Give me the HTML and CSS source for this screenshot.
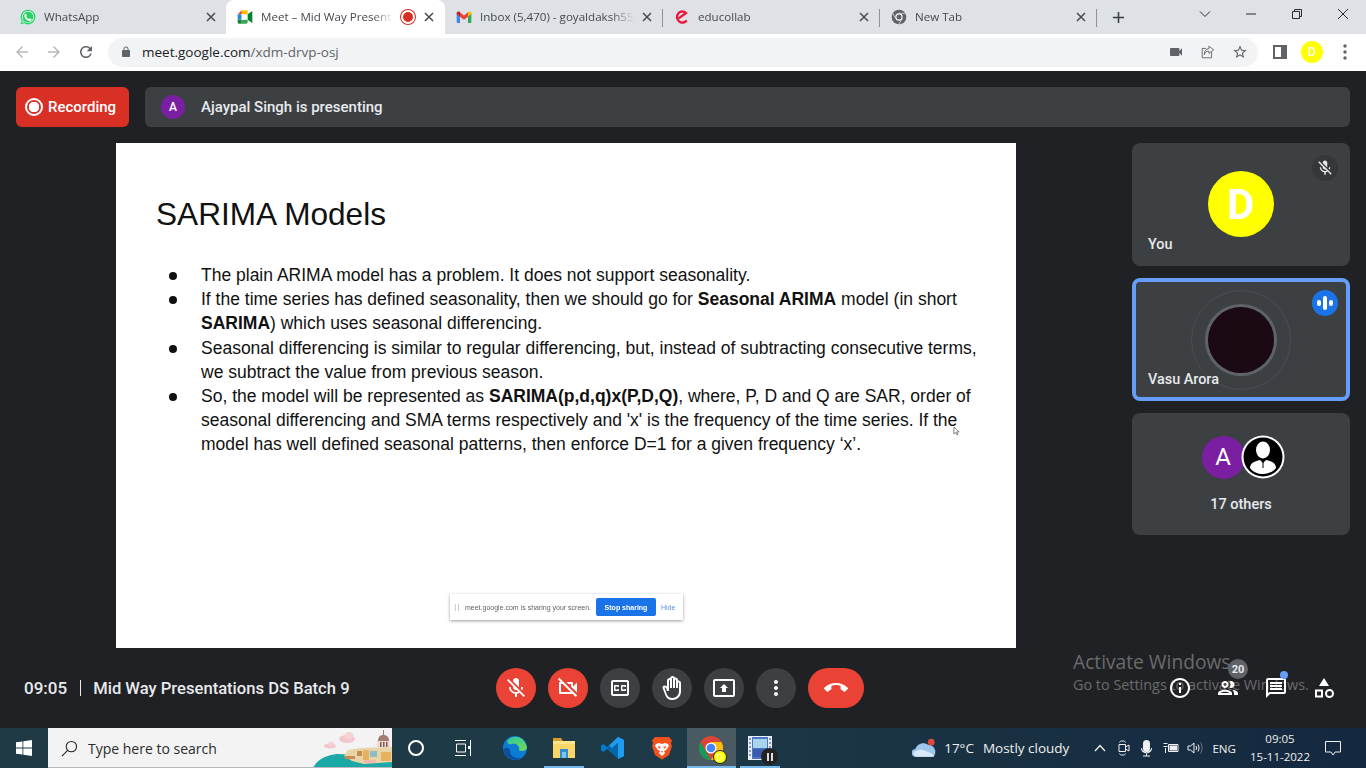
FILE: index.html
```html
<!DOCTYPE html>
<html lang="en">
<head>
<meta charset="utf-8">
<title>Meet – Mid Way Presentations DS Batch 9</title>
<link rel="stylesheet" href="styles.css">
</head>
<body>
<div class="browser">
  <div class="tabstrip">
    <div class="tab tab-first">
      <svg class="favicon" viewBox="0 0 24 24"><path fill="#25d366" d="M12 1a11 11 0 0 0-9.400 16.600L1 23l5.600-1.500A11 11 0 1 0 12 1z"/><path fill="#fff" d="M12 3a9 9 0 0 0-7.600 13.800l-1 3.800 3.900-1A9 9 0 1 0 12 3z"/><path fill="#25d366" d="M12 4a8 8 0 0 0-6.700 12.400l-.6 2.900 2.900-.7A8 8 0 1 0 12 4z"/><path fill="#fff" d="M9 7l1.200 2.800-.9 1.500c.9 1.800 2.200 3 4 3.900l1.400-1.300 2.800 1.300c.2 1.700-1.200 2.800-3.200 2.800-3.500 0-7.800-4.100-7.800-7.800C6.500 8.200 7.500 7 9 7z"/></svg>
      <span class="tab-title">WhatsApp</span>
      <svg class="tab-close" viewBox="0 0 10 10"><path d="M1 1l8 8M9 1l-8 8"/></svg>
    </div>
    <div class="tab tab-active">
      <svg class="favicon" viewBox="0 0 24 24"><path fill="#fbbc04" d="M7 2h9v6H7z"/><path fill="#ea4335" d="M1 8l6-6v6z"/><path fill="#1e88e5" d="M1 8h6v8H1z"/><path fill="#188038" d="M1 16h6v6H3c-1 0-2-1-2-2z"/><path fill="#34a853" d="M7 16h9v4c0 1-1 2-2 2H7z"/><path fill="#00832d" d="M16 8l7-5v18l-7-5z"/><path fill="#fff" d="M7 8h5v8H7z"/></svg>
      <span class="tab-title">Meet – Mid Way Presentations DS</span>
      <span class="rec-dot"></span>
      <svg class="tab-close" viewBox="0 0 10 10"><path d="M1 1l8 8M9 1l-8 8"/></svg>
    </div>
    <div class="tab tab-sep tab-inbox">
      <svg class="favicon" viewBox="0 0 24 24"><path fill="#4285f4" d="M1 6h5v15H2.500C1.700 21 1 20.300 1 19.500z"/><path fill="#34a853" d="M18 6h5v13.500c0 .8-.7 1.500-1.500 1.500H18z"/><path fill="#ea4335" d="M6 5l6 4.800L18 5v6.500l-6 4.500-6-4.500z"/><path fill="#c5221f" d="M1 6.500C1 4 3.700 3 5.500 4.300L6 5v6.500L1 7.500z"/><path fill="#fbbc04" d="M18 5l.5-.7C20.300 3 23 4 23 6.500v1l-5 4z"/></svg>
      <span class="tab-title">Inbox (5,470) - goyaldaksh55@gmail</span>
      <svg class="tab-close" viewBox="0 0 10 10"><path d="M1 1l8 8M9 1l-8 8"/></svg>
    </div>
    <div class="tab tab-sep">
      <svg class="favicon" viewBox="0 0 24 24"><path fill="none" stroke="#e8173c" stroke-width="3.500" d="M19 17c-2 3-7 5-11 2C4 16 3 10 7 6c3-3 8-3 11 0l-11 8"/></svg>
      <span class="tab-title">educollab</span>
      <svg class="tab-close" viewBox="0 0 10 10"><path d="M1 1l8 8M9 1l-8 8"/></svg>
    </div>
    <div class="tab tab-sep">
      <svg class="favicon" viewBox="0 0 24 24"><circle cx="12" cy="12" r="11" fill="#5f6368"/><circle cx="12" cy="12" r="5.500" fill="#fff"/><circle cx="12" cy="12" r="3.800" fill="#5f6368"/><path fill="none" stroke="#dee1e6" stroke-width="1.200" d="M12 6.500h10M7.200 14.800L2.500 6M16.800 14.800L11.500 23"/></svg>
      <span class="tab-title">New Tab</span>
      <svg class="tab-close" viewBox="0 0 10 10"><path d="M1 1l8 8M9 1l-8 8"/></svg>
    </div>
    <svg class="new-tab" viewBox="0 0 14 14"><path d="M7 1v12M1 7h12"/></svg>
    <div class="win-controls">
      <svg class="win-btn" viewBox="0 0 12 12"><path d="M1 3.500l5 5 5-5"/></svg>
      <svg class="win-btn" viewBox="0 0 12 12"><path d="M1 6h10"/></svg>
      <svg class="win-btn" viewBox="0 0 12 12"><path d="M1.500 3.500h7v7h-7zM3.500 3.500v-2h7v7h-2"/></svg>
      <svg class="win-btn" viewBox="0 0 12 12"><path d="M1 1l10 10M11 1L1 11"/></svg>
    </div>
  </div>
  <div class="toolbar">
    <svg class="nav-ic nav-off" viewBox="0 0 24 24"><path d="M20 11H7.830l5.590-5.590L12 4l-8 8 8 8 1.410-1.410L7.830 13H20v-2z"/></svg>
    <svg class="nav-ic nav-off" viewBox="0 0 24 24"><path d="M12 4l-1.410 1.410L16.170 11H4v2h12.170l-5.580 5.590L12 20l8-8z"/></svg>
    <svg class="nav-ic nav-reload" viewBox="0 0 24 24"><path d="M17.650 6.350C16.200 4.900 14.210 4 12 4c-4.420 0-7.990 3.580-7.990 8s3.570 8 7.990 8c3.730 0 6.840-2.550 7.730-6h-2.080c-.82 2.330-3.040 4-5.650 4-3.310 0-6-2.690-6-6s2.690-6 6-6c1.660 0 3.140.69 4.220 1.780L13 11h7V4l-2.350 2.350z"/></svg>
    <div class="omnibox">
      <svg class="lock" viewBox="0 0 24 24"><path d="M18 8h-1V6c0-2.760-2.240-5-5-5S7 3.240 7 6v2H6c-1.100 0-2 .9-2 2v10c0 1.100.9 2 2 2h12c1.100 0 2-.9 2-2V10c0-1.100-.9-2-2-2zm-2.900 0H8.900V6c0-1.710 1.390-3.100 3.100-3.100 1.710 0 3.100 1.390 3.100 3.100v2z"/></svg>
      <span class="url"><span class="url-host">meet.google.com</span>/xdm-drvp-osj</span>
      <svg class="omni-ic omni-cam" viewBox="0 0 24 24"><path d="M17 10.500V7c0-.55-.45-1-1-1H4c-.55 0-1 .45-1 1v10c0 .55.45 1 1 1h12c.55 0 1-.45 1-1v-3.500l4 4v-11l-4 4z"/></svg>
      <svg class="omni-ic omni-share" viewBox="0 0 18 18"><path d="M13 9v6.500H2.500V5H7M10 2.500l5.500 4-5.500 4V8C7 8 5.500 9.500 4.800 12c0-4 2-6.500 5.200-6.700z"/></svg>
      <svg class="omni-ic omni-star" viewBox="0 0 24 24"><path d="M22 9.240l-7.190-.62L12 2 9.190 8.630 2 9.240l5.460 4.730L5.820 21 12 17.270 18.180 21l-1.630-7.030L22 9.240zM12 15.400l-3.760 2.270 1-4.280-3.320-2.880 4.380-.38L12 6.100l1.710 4.040 4.380.38-3.320 2.880 1 4.280L12 15.400z"/></svg>
    </div>
    <span class="side-panel"></span>
    <span class="profile">D</span>
    <svg class="chrome-more" viewBox="0 0 4 16"><circle cx="2" cy="2" r="1.700"/><circle cx="2" cy="8" r="1.700"/><circle cx="2" cy="14" r="1.700"/></svg>
  </div>
</div>

<main class="meet">
  <div class="topbar">
    <div class="recording">
      <span class="rec-icon"></span>
      <span>Recording</span>
    </div>
    <div class="presenting">
      <span class="present-avatar">A</span>
      <span>Ajaypal Singh is presenting</span>
    </div>
  </div>

  <div class="stage">
    <section class="slide">
      <h1 class="slide-title">SARIMA Models</h1>
      <ul class="slide-list">
        <li>The plain ARIMA model has a problem. It does not support seasonality.</li>
        <li>If the time series has defined seasonality, then we should go for <b>Seasonal ARIMA</b> model (in short <b>SARIMA</b>) which uses seasonal differencing.</li>
        <li>Seasonal differencing is similar to regular differencing, but, instead of subtracting consecutive terms, we subtract the value from previous season.</li>
        <li>So, the model will be represented as <b>SARIMA(p,d,q)x(P,D,Q)</b>, where, P, D and Q are SAR, order of seasonal differencing and SMA terms respectively and 'x' is the frequency of the time series. If the model has well defined seasonal patterns, then enforce D=1 for a given frequency ‘x’.</li>
      </ul>
      <div class="share-bar">
        <span class="share-grip"></span>
        <span class="share-text">meet.google.com is sharing your screen.</span>
        <span class="share-stop">Stop sharing</span>
        <span class="share-hide">Hide</span>
      </div>
      <svg class="cursor" viewBox="0 0 8 11"><path d="M1 1v8l2-2 1.500 3 1.200-.6L4.300 6.500H7z"/></svg>
    </section>

    <aside class="tiles">
      <div class="tile">
        <span class="tile-badge badge-muted">
          <svg viewBox="0 0 24 24"><path d="M19 11h-1.700c0 .74-.16 1.430-.43 2.050l1.230 1.230c.56-.98.9-2.090.9-3.280zm-4.020.17c0-.06.02-.11.02-.17V5c0-1.660-1.340-3-3-3S9 3.340 9 5v.18l5.980 5.990zM4.270 3L3 4.270l6.010 6.010V11c0 1.660 1.330 3 2.990 3 .22 0 .44-.03.65-.08l1.660 1.660c-.71.33-1.500.52-2.310.52-2.760 0-5.300-2.100-5.300-5.100H5c0 3.410 2.720 6.230 6 6.720V21h2v-3.280c.91-.13 1.770-.45 2.540-.9L19.730 21 21 19.730 4.270 3z"/></svg>
        </span>
        <span class="tile-avatar avatar-you">D</span>
        <span class="tile-name">You</span>
      </div>
      <div class="tile tile-speaking">
        <span class="tile-badge badge-speaking"><i class="bar bar-s"></i><i class="bar bar-l"></i><i class="bar bar-s"></i></span>
        <span class="ring-outer"><span class="ring-inner"><span class="tile-avatar avatar-vasu"></span></span></span>
        <span class="tile-name">Vasu Arora</span>
      </div>
      <div class="tile tile-others">
        <div class="others-row">
          <span class="other-a">A</span>
          <svg class="other-b" viewBox="0 0 44 44"><circle cx="22" cy="22" r="21.500" fill="#fff"/><circle cx="22" cy="22" r="19.500" fill="#000"/><ellipse cx="22" cy="15" rx="7" ry="8.500" fill="#fff"/><path fill="#fff" d="M9 33c0-5 5-7 10-8l3 3 3-3c5 1 10 3 10 8-3 4-8 6-13 6s-10-2-13-6z"/><path d="M22 27v6" stroke="#000" stroke-width="1"/></svg>
        </div>
        <span class="others-label">17 others</span>
      </div>
    </aside>
  </div>

  <footer class="callbar">
    <div class="meeting-info">
      <span class="clock">09:05</span>
      <span class="divider"></span>
      <span class="meeting-name">Mid Way Presentations DS Batch 9</span>
    </div>
    <div class="controls">
      <span class="ctl ctl-red"><svg viewBox="0 0 24 24"><path d="M19 11h-1.700c0 .74-.16 1.430-.43 2.050l1.230 1.230c.56-.98.9-2.090.9-3.280zm-4.020.17c0-.06.02-.11.02-.17V5c0-1.660-1.340-3-3-3S9 3.340 9 5v.18l5.980 5.990zM4.270 3L3 4.270l6.010 6.010V11c0 1.660 1.330 3 2.990 3 .22 0 .44-.03.65-.08l1.660 1.660c-.71.33-1.500.52-2.310.52-2.760 0-5.300-2.100-5.300-5.100H5c0 3.410 2.720 6.230 6 6.720V21h2v-3.280c.91-.13 1.770-.45 2.540-.9L19.730 21 21 19.730 4.270 3z"/></svg></span>
      <span class="ctl ctl-red"><svg viewBox="0 0 24 24"><path d="M9.560 8l-2-2-4.150-4.140L2 3.270 4.730 6H4c-.55 0-1 .45-1 1v10c0 .55.45 1 1 1h12c.21 0 .39-.08.55-.18L19.730 21l1.410-1.410-8.860-8.860L9.560 8zM5 16V8h1.730l8 8H5zm10-8v2.610l6 6V6.500l-4 4V7c0-.55-.45-1-1-1h-5.610l2 2H15z"/></svg></span>
      <span class="ctl"><svg viewBox="0 0 24 24"><path d="M19 4H5c-1.110 0-2 .9-2 2v12c0 1.100.89 2 2 2h14c1.100 0 2-.9 2-2V6c0-1.100-.9-2-2-2zm0 14H5V6h14v12zM7 15h3c.55 0 1-.45 1-1v-1H9.500v.5h-2v-3h2v.5H11v-1c0-.55-.45-1-1-1H7c-.55 0-1 .45-1 1v4c0 .55.45 1 1 1zm7 0h3c.55 0 1-.45 1-1v-1h-1.500v.5h-2v-3h2v.5H18v-1c0-.55-.45-1-1-1h-3c-.55 0-1 .45-1 1v4c0 .55.45 1 1 1z"/></svg></span>
      <span class="ctl"><svg viewBox="0 0 24 24"><path d="M21 7c0-1.380-1.120-2.500-2.500-2.500-.17 0-.34.02-.5.05V4c0-1.380-1.120-2.500-2.500-2.500-.23 0-.46.03-.67.09C14.460.66 13.560 0 12.500 0c-1.230 0-2.250.89-2.460 2.060C9.870 2.020 9.690 2 9.500 2 8.120 2 7 3.120 7 4.500v5.890c-.34-.31-.76-.54-1.220-.66L5 9.520c-.83-.23-1.700.09-2.190.83-.38.57-.4 1.310-.15 1.950l2.560 6.430C6.490 22.910 9.570 24 12.500 24c4.140 0 8.500-3.360 8.500-8.500V7zm-2 8.500c0 3.080-2.900 6.500-6.500 6.500-2.550 0-4.600-.9-5.730-3.750L4.500 11.470c.02-.01.09-.02.3.03l.62.16c.36.09.58.29.75.66L7 15.010h2V4.500c0-.28.22-.5.5-.5s.5.22.5.5V12h2V2.500c0-.28.22-.5.5-.5s.5.22.5.5V12h2V4c0-.28.22-.5.5-.5s.5.22.5.5v8h2V7c0-.28.22-.5.5-.5s.5.22.5.5v8.500z"/></svg></span>
      <span class="ctl"><svg viewBox="0 0 24 24"><path d="M21 3H3c-1.110 0-2 .89-2 2v14c0 1.110.89 2 2 2h18c1.110 0 2-.89 2-2V5c0-1.110-.89-2-2-2zm0 16.020H3V4.980h18v14.040zM10 12H8l4-4 4 4h-2v4h-4v-4z"/></svg></span>
      <span class="ctl"><svg viewBox="0 0 24 24"><path d="M12 8c1.100 0 2-.9 2-2s-.9-2-2-2-2 .9-2 2 .9 2 2 2zm0 2c-1.100 0-2 .9-2 2s.9 2 2 2 2-.9 2-2-.9-2-2-2zm0 6c-1.100 0-2 .9-2 2s.9 2 2 2 2-.9 2-2-.9-2-2-2z"/></svg></span>
      <span class="ctl ctl-red ctl-end"><svg viewBox="0 0 24 24"><path d="M12 9c-1.600 0-3.150.25-4.600.72v3.100c0 .39-.23.74-.56.9-.98.49-1.870 1.120-2.660 1.850-.18.18-.43.28-.7.28-.28 0-.53-.11-.71-.29L.29 13.080c-.18-.17-.29-.42-.29-.7 0-.28.11-.53.29-.71C3.340 8.780 7.460 7 12 7s8.660 1.780 11.710 4.670c.18.18.29.43.29.71 0 .28-.11.53-.29.71l-2.480 2.480c-.18.18-.43.29-.71.29-.27 0-.52-.11-.7-.28-.79-.74-1.690-1.360-2.670-1.850-.33-.16-.56-.5-.56-.9v-3.100C15.150 9.250 13.600 9 12 9z"/></svg></span>
    </div>
    <div class="side-icons">
      <svg class="side-ic" viewBox="0 0 24 24"><path d="M11 7h2v2h-2zm0 4h2v6h-2zm1-9C6.480 2 2 6.480 2 12s4.480 10 10 10 10-4.480 10-10S17.520 2 12 2zm0 18c-4.410 0-8-3.590-8-8s3.590-8 8-8 8 3.590 8 8-3.590 8-8 8z"/></svg>
      <span class="side-wrap">
        <svg class="side-ic" viewBox="0 0 24 24"><path d="M9 13.750c-2.340 0-7 1.170-7 3.500V19h14v-1.750c0-2.330-4.660-3.500-7-3.500zM4.340 17c.84-.58 2.870-1.250 4.660-1.250s3.820.67 4.660 1.250H4.340zM9 12c1.930 0 3.500-1.570 3.500-3.500S10.930 5 9 5 5.500 6.570 5.500 8.500 7.070 12 9 12zm0-5c.83 0 1.500.67 1.500 1.500S9.830 10 9 10s-1.500-.67-1.500-1.500S8.170 7 9 7zm7.040 6.810c1.160.84 1.960 1.960 1.960 3.440V19h4v-1.750c0-2.020-3.500-3.170-5.960-3.440zM15 12c1.930 0 3.500-1.570 3.500-3.500S16.930 5 15 5c-.54 0-1.040.13-1.500.35.63.89 1 1.980 1 3.150s-.37 2.260-1 3.150c.46.22.96.35 1.500.35z"/></svg>
        <span class="people-count">20</span>
      </span>
      <span class="side-wrap">
        <svg class="side-ic" viewBox="0 0 24 24"><path d="M20 2H4c-1.100 0-2 .9-2 2v18l4-4h14c1.100 0 2-.9 2-2V4c0-1.100-.9-2-2-2zm0 14H5.170L4 17.170V4h16v12zM6 12h12v2H6zm0-3h12v2H6zm0-3h12v2H6z"/></svg>
        <span class="chat-dot"></span>
      </span>
      <svg class="side-ic" viewBox="0 0 24 24"><path d="M12 2l5 8H7z"/><path d="M3 13.500h8v8H3zM5 15.500v4h4v-4z" fill-rule="evenodd"/><path fill-rule="evenodd" d="M17.500 13a4.500 4.500 0 1 0 0 9 4.500 4.500 0 0 0 0-9zm0 2a2.500 2.500 0 1 1 0 5 2.500 2.500 0 0 1 0-5z"/></svg>
    </div>
    <div class="activate">
      <div class="activate-title">Activate Windows</div>
      <div class="activate-sub">Go to Settings to activate Windows.</div>
    </div>
  </footer>
</main>

<footer class="taskbar">
  <svg class="start" viewBox="0 0 16 16"><path d="M0 2.300l6.500-.9v6.200H0zM7.300 1.300L16 0v7.600H7.300zM0 8.400h6.500v6.200L0 13.700zM7.300 8.400H16V16l-8.700-1.300z"/></svg>
  <div class="searchbox">
    <svg class="search-ic" viewBox="0 0 18 18"><circle cx="11" cy="7" r="5.500"/><path d="M7 11l-6 6"/></svg>
    <span class="search-text">Type here to search</span>
    <svg class="search-art" viewBox="0 0 79 40">
      <ellipse cx="34" cy="11" rx="8" ry="4" fill="#f3c6cc"/><ellipse cx="36" cy="8" rx="4.500" ry="4" fill="#f6d0d4"/>
      <ellipse cx="17" cy="18" rx="6" ry="2.500" fill="#f3c6cc"/><ellipse cx="18" cy="16" rx="3" ry="2.500" fill="#f6d0d4"/>
      <path fill="#1aa9a6" d="M0 40c3-7 12-13 24-14l55 2v12z"/>
      <path fill="#e9d3a8" d="M31 28l4-6 12-2 32-1v15l-28 2-12-3z"/>
      <path fill="#c88d52" d="M32 28h10v3H32zM44 23h5v5h-5z"/><path fill="#e8b15e" d="M50 22h6v10h-6zM68 24h10v9H68z"/><path fill="#8fbcc4" d="M57 23h7v6h-7z"/><path fill="#f4b7ad" d="M51 32h12v3H51z"/>
      <path fill="#f1d9cd" d="M64 19V12h13v7z"/><path fill="#a37a74" d="M65 13c0-4 2-6 5.500-6s5.500 2 5.500 6z"/><path fill="#a37a74" d="M70 2h1v5h-1z"/><path fill="#7b5a58" d="M67 14h1.500v5H67zM70 14h1.500v5H70zM73 14h1.500v5H73z"/>
    </svg>
  </div>
  <span class="task-slot task-cortana"><span class="cortana"></span></span>
  <span class="task-slot task-view"><svg class="taskview" viewBox="0 0 16 16"><path d="M0 .5h11M0 15.500h11M1.500 4h9v8h-9zM15.500 0v16"/><path class="tv-fill" d="M13 6h3v3h-3z"/></svg></span>
  <span class="task-slot"><svg class="app" viewBox="0 0 24 24"><defs><linearGradient id="ed1" x1="0" y1="0" x2="1" y2="1"><stop offset="0" stop-color="#2fc8a8"/><stop offset="1" stop-color="#72d850"/></linearGradient></defs><circle cx="12" cy="12" r="12" fill="#0c7bd4"/><path fill="url(#ed1)" d="M4 5c5-7 17-6 20 6 0 4-5 5-8 3 1-4-3-7-7-6-2 .5-4 1-5-3z"/><path fill="#0a4f9c" d="M7 15c0 5 5 8 11 7-6 4-15 1-18-8 2-3 7-3 7 1z"/></svg></span>
  <span class="task-slot task-open"><svg class="app" viewBox="0 0 24 24"><path fill="#d6a02b" d="M1 2h8l2 3H1z"/><path fill="#fbd566" d="M1 5h22v17H1z"/><path fill="#ffe38a" d="M1 5h22v3H1z"/><path fill="#2f8ed6" d="M8 13h8v9h-2v-6h-4v6H8z"/><path fill="#7cc4ee" d="M10 16h4v6h-4z"/></svg></span>
  <span class="task-slot"><svg class="app" viewBox="0 0 24 24"><path fill="#0065a9" d="M17 1l6 3v16l-6 3L6 13l-3.500 2.700L0 14.500V9.500l2.500-1.200L6 11z"/><path fill="#007acc" d="M17 1l6 3v16l-6 3zM2.500 8.300l4.500 3.700-4.500 3.700L0 14.500v-5z"/><path fill="#1f9cf0" d="M17 1l6 3v16l-6 3V6.500L11 12 8 9.500z"/></svg></span>
  <span class="task-slot"><svg class="app" viewBox="0 0 24 24"><path fill="#f1531f" d="M5 1h14l3 3.500-1 3 1 2.500-3 9-6 4-1 .5-1-.5-6-4-3-9 1-2.500-1-3z"/><path fill="#fff" d="M6 8l3-1 3 1 3-1 3 1 1 2-3 4-2 1 1 2-3 3-3-3 1-2-2-1-3-4z"/><path fill="#f1531f" d="M8 10l3 1-2 2zM16 10l-3 1 2 2zM11 15h2l-1 2z"/></svg></span>
  <span class="task-slot task-active"><span class="chrome-wrap"><svg class="app" viewBox="0 0 24 24"><circle cx="12" cy="12" r="12" fill="#db4437"/><path fill="#0f9d58" d="M12 24A12 12 0 0 1 1.600 6l5 9z"/><path fill="#fbbc05" d="M12 6h10.400A12 12 0 0 1 12 24l5-9z"/><circle cx="12" cy="12" r="5.500" fill="#fff"/><circle cx="12" cy="12" r="4.300" fill="#4285f4"/></svg><span class="chrome-badge">D</span></span></span>
  <span class="task-slot task-open"><span class="chrome-wrap"><svg class="app" viewBox="0 0 24 24"><path fill="#e6eef7" d="M0 0h24v24H0z"/><path fill="#4f74c4" d="M4 1h16v22H4z"/><path fill="#a9d4ee" d="M5 3h14v9H5z"/><path fill="#3a5cad" d="M5 13h14v8H5z"/><path fill="#7f97cf" d="M1 2h2v2H1zM1 6h2v2H1zM1 10h2v2H1zM1 14h2v2H1zM1 18h2v2H1zM21 2h2v2h-2zM21 6h2v2h-2zM21 10h2v2h-2z"/></svg><span class="pause-badge"><i></i><i></i></span></span></span>
  <div class="tray">
    <span class="weather">
      <svg class="weather-ic" viewBox="0 0 26 20"><circle cx="20" cy="4" r="3.500" fill="#e0483b"/><path fill="#9ec7ee" d="M4 19a4 4 0 0 1-.5-8C5 6 12 3 17 7c4 .5 6 2 7 5 1 4-1 7-3 7z"/><path fill="#d8e9f8" d="M4 19c-3-1-3-5 0-6 5-2 9-1 12 1 3 1 6 2 7 5z"/></svg>
      <span>17°C</span><span class="weather-text">Mostly cloudy</span>
    </span>
    <svg class="tray-ic chev" viewBox="0 0 12 8"><path d="M1 7l5-5.500L11 7"/></svg>
    <svg class="tray-ic cam" viewBox="0 0 12 16"><path d="M1 4.500h6.500v7H1zM7.500 7l3.500-2v6l-3.500-2M1.500 2.500c.5-1 1-1.500 2-1.500h2c1 0 1.500.5 2 1.500M1.500 13.500c.5 1 1 1.500 2 1.500h2c1 0 1.500-.5 2-1.500"/></svg>
    <svg class="tray-mic" viewBox="0 0 11 17"><rect x="2" y="0" width="7" height="12" rx="3.500"/><path d="M0 8c0 7 11 7 11 0h-1c0 5-9 5-9 0zM5 12.500h1v3H5zM2 15.500h7v1H2z"/></svg>
    <svg class="tray-ic batt" viewBox="0 0 16 12"><path d="M.5 1.500h4M.5 4.500h4M2.500 6v5M5.500 2.500h9.500v7H5.500z"/><path class="batt-fill" d="M6.500 3.500h7.500v5H6.500z"/></svg>
    <svg class="tray-ic vol" viewBox="0 0 16 14"><path d="M1 5h2.500L7 2v10L3.500 9H1zM9 5c.7 1 .7 3 0 4M11 3.500c1.300 2 1.300 5 0 7"/><path class="vol-dim" d="M13.500 1.500c2 3 2 8 0 11"/></svg>
    <span class="lang">ENG</span>
    <span class="datetime"><span>09:05</span><span>15-11-2022</span></span>
    <svg class="tray-ic notif" viewBox="0 0 16 15"><path d="M.5.5h15v10.500H10l-2 3-2-3H.5z"/></svg>
  </div>
</footer>
</body>
</html>
```
FILE: styles.css
```css
* { box-sizing: border-box; }
html, body { margin: 0; padding: 0; width: 1366px; height: 768px; overflow: hidden; }
body { display: flex; flex-direction: column; background: #202124; font-family: Roboto, "Liberation Sans", sans-serif; }

/* browser chrome */
.browser { flex: none; height: 71px; display: flex; flex-direction: column; }
.tabstrip { height: 34px; background: #dee1e6; display: flex; align-items: center; position: relative; }
.tab { width: 217px; height: 34px; display: flex; align-items: center; padding: 0 11px; gap: 8px; font: 11.600px "Open Sans", sans-serif; color: #45494e; flex: none; }
.tab-sep { position: relative; }
.tab-sep::after { content: ""; position: absolute; right: 0; top: 9px; height: 18px; width: 1px; background: #8e9297; }
.tab-first { width: 226px; padding: 0 10px 0 20px; }
.tab-active { background: #fff; border-radius: 8px 8px 0 0; width: 219px; }
.tab-inbox { width: 218px; }
.favicon { width: 16px; height: 16px; flex: none; }
.tab-title { flex: 1; min-width: 0; white-space: nowrap; overflow: hidden; margin-top: -1px; -webkit-mask-image: linear-gradient(90deg, #000 85%, transparent); mask-image: linear-gradient(90deg, #000 85%, transparent); }
.tab-close { width: 10px; height: 10px; flex: none; fill: none; stroke: #45494e; stroke-width: 1.500; }
.rec-dot { width: 14px; height: 14px; border-radius: 50%; flex: none; background: #d93025; border: 2px solid #fff; box-shadow: 0 0 0 1px #d93025; margin-right: 1px; }
.new-tab { width: 13px; height: 13px; margin-left: 15px; fill: none; stroke: #3c4043; stroke-width: 1.700; flex: none; }
.win-controls { margin-left: auto; display: flex; height: 34px; }
.win-btn { width: 46px; height: 12px; margin-top: 8px; fill: none; stroke: #2a2a2a; stroke-width: 1; flex: none; }

.toolbar { height: 37px; background: #fff; display: flex; align-items: center; padding: 0 0 1px 13px; }
.nav-ic { width: 18px; height: 18px; margin-right: 14px; fill: #5f6368; flex: none; }
.nav-off { fill: #b6b9bd; }
.nav-reload { margin-right: 13px; }
.omnibox { width: 1150px; height: 29px; border-radius: 15px; background: #f1f3f4; display: flex; align-items: center; padding: 0 10px 0 12px; flex: none; }
.lock { width: 12px; height: 14px; fill: #5f6368; flex: none; }
.url { margin-left: 10px; font: 13.500px "Open Sans", sans-serif; color: #5f6368; flex: 1; }
.url-host { color: #202124; }
.omni-ic { flex: none; }
.omni-cam { width: 16px; height: 16px; fill: #5f6368; margin-right: 16px; }
.omni-share { width: 16px; height: 16px; fill: none; stroke: #5f6368; stroke-width: 1; margin-right: 16px; }
.omni-star { width: 16px; height: 16px; fill: #5f6368; }
.side-panel { width: 14px; height: 14px; border: 2px solid #5f6368; border-right-width: 6px; margin-left: 15px; flex: none; }
.profile { width: 22px; height: 22px; border-radius: 50%; background: #ffff00; color: #fff; font: 500 12px Roboto, sans-serif; display: flex; align-items: center; justify-content: center; margin-left: 14px; flex: none; }
.chrome-more { width: 4px; height: 16px; fill: #5f6368; margin-left: 20px; flex: none; }

/* meet */
.meet { flex: 1; min-height: 0; display: flex; flex-direction: column; background: #202124; position: relative; }
.topbar { height: 72px; padding: 16px 16px 0; display: flex; gap: 16px; color: #e8eaed; font-weight: 500; font-size: 14px; flex: none; }
.recording { width: 113px; height: 40px; border-radius: 6px; background: #d93025; color: #fff; display: flex; align-items: center; gap: 5px; padding-left: 9px; font-size: 15px; }
.rec-icon { width: 18px; height: 18px; border-radius: 50%; border: 2px solid #fff; background: radial-gradient(circle, #fff 0 5px, transparent 5.500px); flex: none; }
.presenting { flex: 1; height: 40px; border-radius: 6px; background: #3c4043; display: flex; align-items: center; gap: 16px; padding-left: 16px; font-size: 15px; }
.present-avatar { width: 24px; height: 24px; border-radius: 50%; background: #7b1fa2; color: #fff; font-size: 12px; display: flex; align-items: center; justify-content: center; }

.stage { height: 505px; display: flex; padding: 0 16px 0 116px; flex: none; }
.slide { width: 900px; height: 505px; background: #fff; color: #111; position: relative; font-family: "Liberation Sans", Arial, sans-serif; padding: 52px 0 0 40px; flex: none; }
.slide-title { font-size: 31.600px; font-weight: 400; margin: 0; line-height: 38px; }
.slide-list { margin: 30px 0 0; padding: 0 0 0 45px; width: 825px; list-style: none; font-size: 17.500px; line-height: 24.200px; }
.slide-list li { position: relative; }
.slide-list li::before { content: ""; position: absolute; left: -32px; top: 9px; width: 8px; height: 8px; border-radius: 50%; background: #111; }
.share-bar { position: absolute; left: 334px; top: 451px; width: 233px; height: 26px; background: #fff; box-shadow: 0 1px 3px rgba(0,0,0,.4); display: flex; align-items: center; padding-left: 5px; color: #5f6368; font-size: 7px; filter: blur(.3px); }
.share-grip { width: 4px; height: 7px; border-left: 1px solid #ccc; border-right: 1px solid #ccc; flex: none; }
.share-text { margin-left: 6px; width: 126px; white-space: nowrap; flex: none; }
.share-stop { width: 60px; height: 18px; background: #1a73e8; color: #fff; border-radius: 2px; display: flex; align-items: center; justify-content: center; font-weight: 700; margin-left: 5px; flex: none; }
.share-hide { color: #5a8fe0; margin-left: 5px; }
.cursor { position: absolute; left: 837px; top: 283px; width: 7px; height: 10px; fill: #fff; stroke: #555; stroke-width: .8; }

.tiles { margin-left: auto; width: 218px; display: flex; flex-direction: column; gap: 12px; }
.tile { height: 123px; background: #3c4043; border-radius: 8px; position: relative; display: flex; align-items: center; justify-content: center; flex: none; }
.tile-speaking { border: 4px solid #669df6; }
.tile-others { height: 122px; flex-direction: column; justify-content: flex-start; padding-top: 22px; }
.tile-avatar { width: 66px; height: 66px; border-radius: 50%; display: flex; align-items: center; justify-content: center; }
.avatar-you { background: #ffff00; color: #fff; font-size: 42px; font-weight: 700; margin-top: -2px; padding-top: 2px; }
.avatar-vasu { background: #1b0a14; }
.ring-outer { width: 100px; height: 100px; border-radius: 50%; border: 1px solid #4a4e52; display: flex; align-items: center; justify-content: center; }
.ring-inner { width: 72px; height: 72px; border-radius: 50%; border: 3px solid #5f6368; display: flex; align-items: center; justify-content: center; }
.tile-name { position: absolute; left: 16px; bottom: 13px; font-size: 14.400px; font-weight: 500; color: #e8eaed; }
.tile-speaking .tile-name { left: 12px; bottom: 9px; }
.tile-badge { position: absolute; right: 12px; top: 12px; width: 26px; height: 26px; border-radius: 50%; display: flex; align-items: center; justify-content: center; gap: 2px; }
.tile-speaking .tile-badge { right: 8px; top: 8px; }
.badge-muted { background: #35383b; }
.badge-muted svg { width: 18px; height: 18px; fill: #e8eaed; }
.badge-speaking { background: #1a73e8; }
.bar { display: block; width: 4px; border-radius: 2px; background: #fff; }
.bar-s { height: 6px; }
.bar-l { height: 14px; }
.others-row { display: flex; align-items: center; height: 44px; margin-left: 4px; }
.other-a { width: 43px; height: 43px; border-radius: 50%; background: #7b1fa2; color: #fff; font-size: 24px; display: flex; align-items: center; justify-content: center; }
.other-b { width: 44px; height: 44px; margin-left: -4px; }
.others-label { margin-top: 17px; font-size: 14.500px; font-weight: 500; color: #e8eaed; }

.callbar { flex: 1; min-height: 0; display: flex; align-items: center; position: relative; color: #e8eaed; padding-left: 24px; }
.meeting-info { width: 472px; display: flex; align-items: center; font-size: 16.600px; font-weight: 500; flex: none; }
.clock { font-size: 17px; }
.divider { width: 1px; height: 16px; background: #e8eaed; margin: 0 12px 0 13px; }
.controls { display: flex; gap: 12px; flex: none; }
.ctl { width: 40px; height: 40px; border-radius: 50%; background: #3c4043; display: flex; align-items: center; justify-content: center; }
.ctl svg { width: 24px; height: 24px; fill: #fff; }
.ctl-red { background: #ea4335; }
.ctl-end { width: 56px; border-radius: 20px; }
.side-icons { display: flex; gap: 24px; margin-left: auto; margin-right: 30px; align-items: center; position: relative; z-index: 1; }
.side-wrap { position: relative; display: flex; }
.side-ic { width: 24px; height: 24px; fill: #fff; display: block; flex: none; }
.people-count { position: absolute; left: 12px; top: -17px; width: 20px; height: 20px; border-radius: 50%; background: #5f6368; color: #e8eaed; font-size: 11px; font-weight: 700; display: flex; align-items: center; justify-content: center; }
.chat-dot { position: absolute; right: 0; top: -5px; width: 8px; height: 8px; border-radius: 50%; background: #669df6; }
.activate { position: absolute; left: 1073px; top: 2px; color: #6a6b6d; font-family: "Open Sans", sans-serif; white-space: nowrap; }
.activate-title { font-size: 19.200px; line-height: 24px; }
.activate-sub { font-size: 14.400px; line-height: 22px; }

/* taskbar */
.taskbar { flex: none; height: 40px; display: flex; align-items: stretch; background: linear-gradient(90deg, #1f3a44 0%, #1e3a47 45%, #14283f 100%); color: #fff; font-family: "Open Sans", sans-serif; }
.start { width: 16px; height: 16px; fill: #fff; margin: 12px 16px 0 16px; flex: none; }
.searchbox { width: 344px; background: #f3f3f3; border-bottom: 1px solid #b9b9b9; display: flex; align-items: center; padding: 2px 0 0 13px; position: relative; overflow: hidden; flex: none; }
.search-ic { width: 17px; height: 17px; fill: none; stroke: #222; stroke-width: 1.100; flex: none; }
.search-text { margin-left: 10px; color: #2c2c2c; font-size: 14px; }
.search-art { position: absolute; right: 0; top: 0; width: 79px; height: 40px; }
.task-slot { width: 49px; display: flex; align-items: center; justify-content: center; flex: none; position: relative; }
.task-cortana { width: 48px; }
.task-view { width: 46px; margin-right: 4.500px; }
.task-open::after, .task-active::after { content: ""; position: absolute; bottom: 0; left: 4px; right: 5px; height: 2px; background: #76b9ed; }
.task-active { background: #4a5a63; }
.task-active::after { left: 0; right: 0; }
.cortana { width: 16px; height: 16px; border: 2px solid #fff; border-radius: 50%; }
.taskview { width: 16px; height: 16px; fill: none; stroke: #fff; stroke-width: 1; }
.tv-fill { fill: #fff; stroke: none; }
.app { width: 24px; height: 24px; display: block; }
.chrome-wrap { position: relative; display: block; }
.chrome-badge { position: absolute; right: -4px; bottom: -4px; width: 14px; height: 14px; border-radius: 50%; background: #ffff00; border: 1px solid #222; color: #fff; font-size: 9px; display: flex; align-items: center; justify-content: center; }
.pause-badge { position: absolute; right: -6px; bottom: -5px; width: 17px; height: 17px; border-radius: 50%; background: #222; display: flex; align-items: center; justify-content: center; gap: 2px; }
.pause-badge i { width: 2px; height: 8px; background: #ddd; }
.tray { margin-left: auto; display: flex; align-items: center; flex: none; font-size: 13.500px; color: #f0f0f0; }
.weather { display: flex; align-items: center; gap: 7px; }
.weather-ic { width: 25px; height: 20px; }
.weather-text { margin-left: 2px; }
.tray-ic { fill: none; stroke: #f0f0f0; stroke-width: 1; flex: none; }
.chev { width: 12px; height: 8px; margin-left: 25px; stroke-width: 1.300; }
.cam { width: 12px; height: 16px; margin-left: 12px; }
.tray-mic { width: 11px; height: 17px; fill: #f0f0f0; margin-left: 11px; flex: none; }
.batt { width: 16px; height: 12px; margin-left: 11px; }
.batt-fill { fill: #f0f0f0; stroke: none; }
.vol { width: 16px; height: 14px; margin-left: 8px; }
.vol-dim { stroke: #6a7a88; }
.lang { margin-left: 9px; font-size: 11.600px; }
.datetime { display: flex; flex-direction: column; align-items: center; margin-left: 14px; font-size: 11.500px; line-height: 18px; }
.notif { width: 16px; height: 15px; margin: 0 25px 0 15px; }
```
